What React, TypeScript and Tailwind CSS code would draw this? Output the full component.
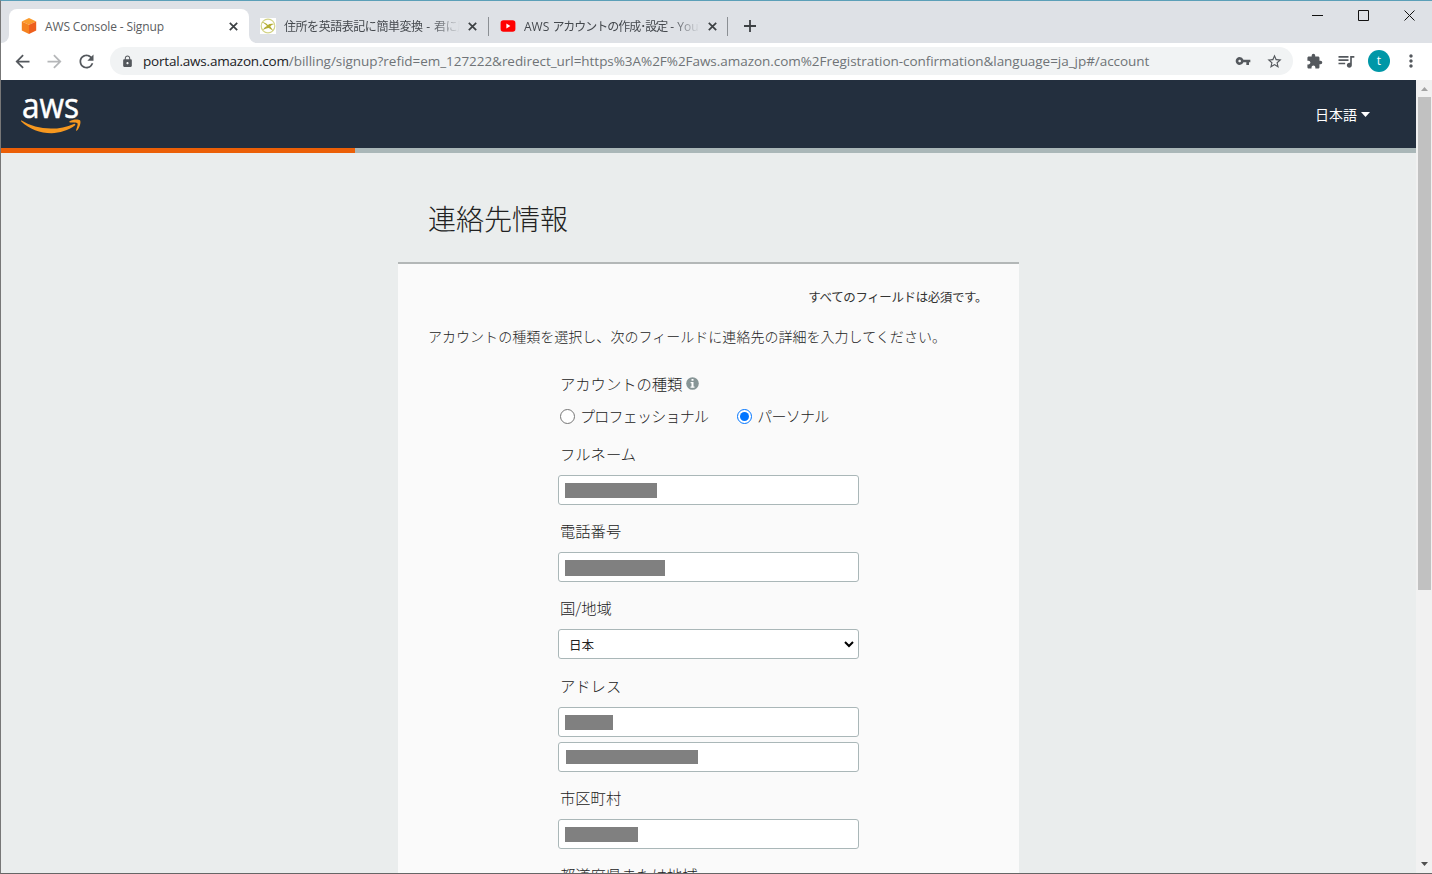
import { useState } from "react";
import clsx from "clsx";
import {
  MdArrowBack,
  MdArrowForward,
  MdExtension,
  MdLock,
  MdMoreVert,
  MdQueueMusic,
  MdRefresh,
  MdStarBorder,
  MdVpnKey,
} from "react-icons/md";

function CubeIcon() {
  return (
    <svg className="w-4 h-4" viewBox="0 0 16 16">
      <path d="M8 0 15.2 3.4 8 6.8 .8 3.4z" fill="#fb9a2c" />
      <path d="M.8 3.4 8 6.8V16L.8 12.4z" fill="#f58220" />
      <path d="M15.2 3.4 8 6.8V16l7.2-3.6z" fill="#ee5f1c" />
    </svg>
  );
}

function BirdIcon() {
  return (
    <svg className="w-4 h-4 bg-white" viewBox="0 0 16 16" fill="none">
      <circle cx="8" cy="8" r="6.8" stroke="#d3d488" strokeWidth="1.2" />
      <path d="M1.500 4c3 .2 4.800 1.300 6.300 3 1.700-1.200 3.700-1.500 6.700-.9-2.300.4-3.500 1.300-4.200 2.500l3.200 4.400-4.700-3.100c-2 .1-4 .8-5.800 2.400.8-2.300 2.200-3.500 4-4.200C5.500 6.300 3.800 5 1.500 4z" fill="#b3ad35" />
    </svg>
  );
}

function YoutubeIcon() {
  return (
    <svg className="w-4 h-4" viewBox="0 0 16 16">
      <rect x=".6" y="2.200" width="14.800" height="11.600" rx="2.800" fill="#f00" />
      <path d="M6.400 5.600v4.800L10.400 8z" fill="#fff" />
    </svg>
  );
}

function CloseIcon() {
  return (
    <svg className="w-[9px] h-[9px] shrink-0" viewBox="0 0 9 9" stroke="#3c4043" strokeWidth="1.700">
      <path d="M.8.8l7.400 7.400M8.200.8.8 8.200" />
    </svg>
  );
}

function InfoIcon() {
  return (
    <svg className="w-[13px] h-[13px]" viewBox="0 0 13 13">
      <circle cx="6.500" cy="6.500" r="6.300" fill="#879596" />
      <path d="M5.500 2h2v1.700h-2zM4.600 5h2.900v4.400h1v1.300H4.500V9.400h1V6.300h-.9z" fill="#fff" />
    </svg>
  );
}

function AwsLogo() {
  return (
    <svg className="w-[60px] h-[40px] overflow-visible" viewBox="0 0 60 40">
      <text
        x="1"
        y="23.500"
        textLength="57"
        lengthAdjust="spacingAndGlyphs"
        className="font-['Open_Sans',sans-serif] font-medium text-[34px]"
        fill="#fff"
        stroke="#fff"
        strokeWidth=".5"
      >
        aws
      </text>
      <path d="M.6 26.600C9 31.700 19 34.600 30 34.600c8 0 16-1.700 22.800-4.700 1.200-.5 2.200.8 1 1.700C47.500 36.200 38.500 39.200 30.500 39.200 19 39.200 8.300 35 .3 27.400c-.6-.6-.3-1.200.3-.8z" fill="#f7981f" />
      <path d="M48.600 27.300c3-2 8.300-2.300 10.400-1.100 1.300 1.600-.2 7.800-3 10.300-.6.500-1.200.2-.9-.5.700-1.800 2-5.600 1.300-6.700-.8-1-4.600-.8-7.300-.9-.9-.1-1.100-.700-.5-1.100z" fill="#f7981f" />
    </svg>
  );
}

function Tabs() {
  return (
    <div className="h-[42px] flex items-start justify-between bg-[#dee1e6]">
      <div className="flex h-full pt-2">
        <div className="h-full w-2 bg-white">
          <div className="h-full rounded-br-lg bg-[#dee1e6]" />
        </div>
        <div className="w-[240px] h-full flex items-center rounded-t-lg bg-white pl-3 pr-[11px]">
          <CubeIcon />
          <span className="ml-2 mt-px flex-1 whitespace-nowrap tracking-[-0.13px] text-[#5a5d61]">AWS Console - Signup</span>
          <CloseIcon />
        </div>
        <div className="h-full w-2 bg-white">
          <div className="h-full rounded-bl-lg bg-[#dee1e6]" />
        </div>
        <div className="w-[231px] flex items-center pl-[3px] pr-[11px]">
          <BirdIcon />
          <span className="ml-2 mt-px w-[176px] overflow-hidden whitespace-nowrap tracking-[-0.45px] text-[#45494e] [mask-image:linear-gradient(to_right,black_84%,transparent)]">
            住所を英語表記に簡単変換<span className="tracking-[0.4px]"> - </span>君に届け
          </span>
          <span className="ml-auto flex"><CloseIcon /></span>
        </div>
        <div className="my-[8px] h-[19px] w-px bg-[#8b8f94]" />
        <div className="w-[238px] flex items-center pl-[11px] pr-[10px]">
          <YoutubeIcon />
          <span className="ml-2 mt-px w-[176px] overflow-hidden whitespace-nowrap tracking-[-1.02px] text-[#45494e] [mask-image:linear-gradient(to_right,black_84%,transparent)]">
            <span className="tracking-normal">AWS </span>
            アカウントの作成･設定
            <span className="tracking-normal"> - YouTube</span>
          </span>
          <span className="ml-auto flex"><CloseIcon /></span>
        </div>
        <div className="my-[8px] h-[19px] w-px bg-[#8b8f94]" />
        <svg className="ml-4 mt-[11px] w-3 h-3" viewBox="0 0 12 12" stroke="#3c4043" strokeWidth="1.800">
          <path d="M6 0v12M0 6h12" />
        </svg>
      </div>

      <div className="flex items-center gap-[35px] pt-[9px] pr-[17px]">
        <svg className="w-[11px] h-[11px]" viewBox="0 0 11 11" stroke="#111"><path d="M0 5.500h11" /></svg>
        <svg className="w-[11px] h-[11px]" viewBox="0 0 11 11" fill="none" stroke="#111"><path d="M.5.5h10v10H.5z" /></svg>
        <svg className="w-[11px] h-[11px]" viewBox="0 0 11 11" stroke="#111"><path d="M.5.5l10 10M10.500.5l-10 10" /></svg>
      </div>
    </div>
  );
}

function Toolbar() {
  return (
    <div className="h-[37px] flex items-center bg-white pl-[11px] pb-px text-[#54585d]">
      <MdArrowBack className="w-[21px] h-[21px]" />
      <MdArrowForward className="ml-[11px] w-[21px] h-[21px] text-[#b5b7b9]" />
      <MdRefresh className="ml-[11px] w-[21px] h-[21px]" />
      <div className="ml-[13px] flex h-7 w-[1183px] items-center rounded-full bg-[#f1f3f4] pl-[11px] pr-[10px]">
        <MdLock className="w-[13px] h-[13px]" />
        <span className="ml-[9px] flex-1 whitespace-nowrap text-[13.500px] tracking-[-0.04px] text-[#6f7377]">
          <span className="tracking-[-0.2px] text-[#202124]">portal.aws.amazon.com</span>
          /billing/signup?refid=em_127222&amp;redirect_url=https%3A%2F%2Faws.amazon.com%2Fregistration-confirmation&amp;language=ja_jp#/account
        </span>
        <MdVpnKey className="w-4 h-4" />
        <MdStarBorder className="ml-[15px] w-[17px] h-[17px]" />
      </div>
      <MdExtension className="ml-[13px] w-[17px] h-[17px]" />
      <MdQueueMusic className="ml-[13px] w-5 h-5" />
      <div className="ml-[12px] w-[22px] h-[22px] flex items-center justify-center rounded-full bg-[#0097a7] pb-px text-xs text-white">
        t
      </div>
      <MdMoreVert className="ml-[11px] w-5 h-5" />
    </div>
  );
}

function Label({ text, info }: { text: string; info?: boolean }) {
  return (
    <div className="flex h-6 items-center gap-1 pl-[2px] text-[15.300px] font-light text-[#222]">
      {text}
      {info && <InfoIcon />}
    </div>
  );
}

// the typed value is hidden behind a grey bar
function HiddenInput({ bar }: { bar: string }) {
  return (
    <div className="flex h-[30px] items-center rounded-[3px] border border-[#aab7b8] bg-white px-[6px]">
      <div className={clsx("bg-[#808080]", bar)} />
    </div>
  );
}

function Radio({ text, checked, onSelect }: { text: string; checked: boolean; onSelect: () => void }) {
  return (
    <button className="flex items-center gap-[5px] cursor-pointer" onClick={onSelect}>
      <span
        className={clsx(
          "mt-px flex w-[15px] h-[15px] items-center justify-center rounded-full border bg-white",
          checked ? "border-[#0075ff]" : "border-[#767676]"
        )}
      >
        {checked && <span className="w-[9px] h-[9px] rounded-full bg-[#0075ff]" />}
      </span>
      <span className="whitespace-nowrap text-[15px] tracking-[-0.75px] font-light text-[#222]">{text}</span>
    </button>
  );
}

function SignupForm() {
  const [type, setType] = useState("personal");

  return (
    <div className="ml-[160px] mt-[25px] w-[301px] text-[#222]">
      <Label text="アカウントの種類" info />
      <div className="mt-[9px] flex h-6 gap-[29px] pl-[2px]">
        <Radio text="プロフェッショナル" checked={type === "pro"} onSelect={() => setType("pro")} />
        <Radio text="パーソナル" checked={type === "personal"} onSelect={() => setType("personal")} />
      </div>

      <div className="mt-[13px] flex flex-col gap-[14px]">
        <div className="flex flex-col gap-[10px]">
          <Label text="フルネーム" />
          <HiddenInput bar="w-[92px] h-[15px] mt-px" />
        </div>
        <div className="-mt-px flex flex-col gap-[10px]">
          <Label text="電話番号" />
          <HiddenInput bar="w-[100px] h-4 mt-[2px]" />
        </div>
        <div className="-mt-px flex flex-col gap-[10px]">
          <Label text="国/地域" />
          <div className="flex h-[30px] items-center justify-between rounded-[3px] border border-[#aab7b8] bg-white pl-[10px] pr-[4px] text-[12.500px]">
            <span className="mt-[2px]">日本</span>
            <svg className="w-[10px] h-[7px]" viewBox="0 0 10 7" fill="none" stroke="#000" strokeWidth="2">
              <path d="M1 1l4 4 4-4" />
            </svg>
          </div>
        </div>
        <div className="flex flex-col gap-[10px]">
          <Label text="アドレス" />
          <HiddenInput bar="w-[48px] h-[15px] mt-px" />
          <div className="-mt-[5px]">
            <HiddenInput bar="ml-px w-[132px] h-[14px]" />
          </div>
        </div>
        <div className="-mt-px flex flex-col gap-[10px]">
          <Label text="市区町村" />
          <HiddenInput bar="w-[73px] h-[15px] mt-px" />
        </div>
        <div className="-mt-px">
          <Label text="都道府県または地域" />
        </div>
      </div>
    </div>
  );
}

function Scrollbar() {
  return (
    <div className="flex w-4 shrink-0 flex-col items-center bg-[#f1f1f1]">
      <svg className="mt-[7px] mb-[6px] w-[7px] h-1" viewBox="0 0 7 4"><path d="M0 4 3.500 0 7 4z" fill="#a3a3a3" /></svg>
      <div className="h-[493px] w-[13px] bg-[#c1c1c1]" />
      <svg className="mt-auto mb-[7px] w-[7px] h-1" viewBox="0 0 7 4"><path d="M0 0l3.500 4L7 0z" fill="#505050" /></svg>
    </div>
  );
}

export default function App() {
  return (
    <div className="flex h-[874px] w-[1432px] flex-col overflow-hidden border-l border-b border-t border-l-[#777] border-b-[#666] border-t-[#5b9fb8] bg-[#eaeded] font-['Open_Sans','Noto_Sans_CJK_JP',sans-serif] text-xs">
      <Tabs />
      <Toolbar />
      <div className="flex min-h-0 flex-1">
        <div className="flex-1 overflow-hidden font-['Noto_Sans_CJK_JP',sans-serif]">
          <div className="flex h-[68px] items-center justify-between bg-[#232f3e] pl-5 pr-[46px]">
            <AwsLogo />
            <div className="flex items-center gap-1 text-[14px] text-white">
              日本語
              <svg className="mt-px w-[9px] h-[5px]" viewBox="0 0 9 5"><path d="M0 0h9L4.500 5z" fill="#fff" /></svg>
            </div>
          </div>
          <div className="h-[5px] bg-[#aab7b8]">
            <div className="h-full w-1/4 bg-[#eb5f07]" />
          </div>

          <div className="ml-[397px] w-[621px]">
            <h1 className="mt-[45px] ml-[30px] text-[28px] leading-10 font-light text-[#222]">連絡先情報</h1>
            <div className="mt-[24px] h-[700px] border-t-2 border-[#b3b7b7] bg-[#fafafa]">
              <p className="mt-[23px] mr-[32px] text-right text-[12.500px] leading-5 tracking-[-0.4px] text-[#333]">
                すべてのフィールドは必須です。
              </p>
              <p className="mt-[19px] ml-[30px] text-sm leading-5 tracking-[0.03px] font-light text-[#222]">
                アカウントの種類を選択し、次のフィールドに連絡先の詳細を入力してください。
              </p>
              <SignupForm />
            </div>
          </div>
        </div>
        <Scrollbar />
      </div>
    </div>
  );
}
